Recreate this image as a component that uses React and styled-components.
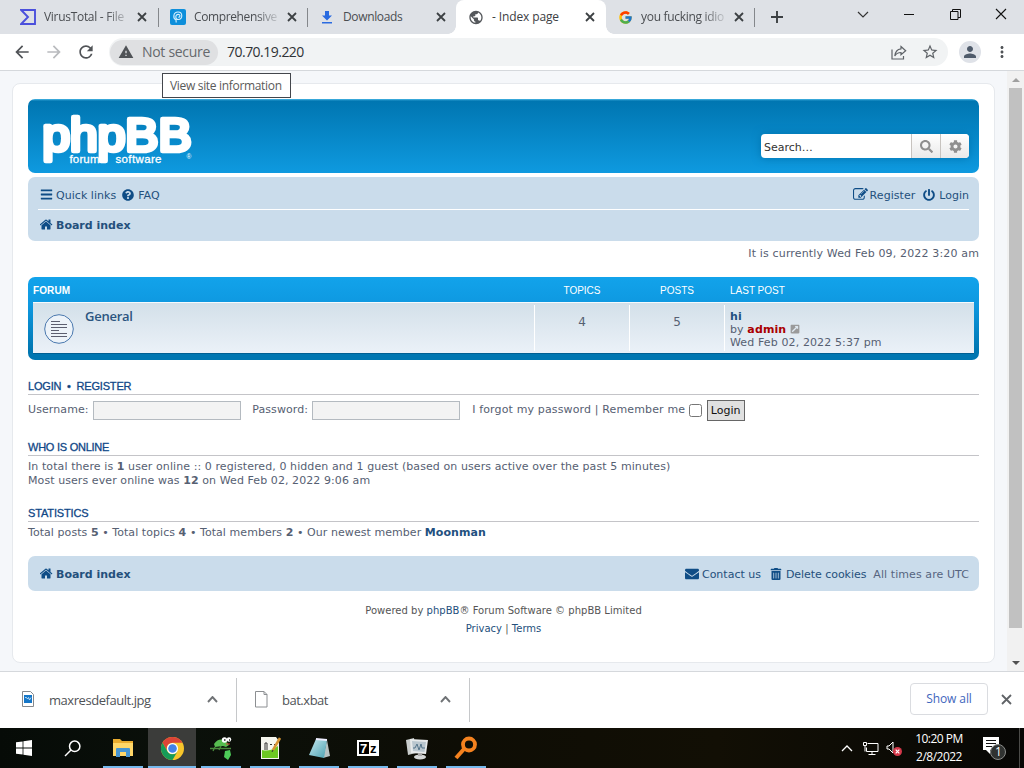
import React from "react";
import styled, { createGlobalStyle } from "styled-components";
import {
  MdArrowBack,
  MdArrowForward,
  MdRefresh,
  MdWarning,
  MdStarBorder,
  MdPerson,
  MdMoreVert,
  MdPublic,
} from "react-icons/md";
import {
  FaBars,
  FaQuestionCircle,
  FaPowerOff,
  FaEnvelope,
  FaTrashAlt,
  FaSearch,
  FaCog,
  FaExternalLinkSquareAlt,
} from "react-icons/fa";
import { FcGoogle } from "react-icons/fc";

const GlobalStyle = createGlobalStyle`
  * {
    box-sizing: border-box;
  }
  body {
    margin: 0;
    overflow: hidden;
    background: #fff;
  }
`;

const ui = `"Open Sans", "Noto Sans", sans-serif`;
const verdana = `"DejaVu Sans", sans-serif`;
const arial = `"Liberation Sans", Arial, sans-serif`;

const Screen = styled.div`
  width: 1024px;
  height: 768px;
  display: flex;
  flex-direction: column;
  overflow: hidden;
  position: relative;
  font-family: ${ui};
`;

/* browser tabs */

const TabStrip = styled.div`
  height: 34px;
  background: #dee1e6;
  display: flex;
  align-items: stretch;
  padding-left: 9px;
  flex: none;
`;

const TabItem = styled.div`
  width: 149px;
  display: flex;
  align-items: center;
  padding-left: ${(p) => p.$indent ?? 12}px;
  position: relative;
  color: ${(p) => (p.$active ? "#3c4043" : "#4a4d51")};
  background: ${(p) => (p.$active ? "#fff" : "transparent")};
  border-radius: ${(p) => (p.$active ? "8px 8px 0 0" : "0")};

  ${(p) =>
    p.$active &&
    `
    width: 150px;
    margin-right: -1px;
    &::before,
    &::after {
      content: "";
      position: absolute;
      bottom: 0;
      width: 8px;
      height: 8px;
    }
    &::before {
      left: -8px;
      background: radial-gradient(circle at 0 0, transparent 7.5px, #fff 8px);
    }
    &::after {
      right: -8px;
      background: radial-gradient(circle at 100% 0, transparent 7.5px, #fff 8px);
    }
  `}
`;

const Divider = styled.span`
  position: absolute;
  right: -1px;
  top: 8px;
  width: 1px;
  height: 19px;
  background: #84878b;
`;

const Favicon = styled.span`
  width: 16px;
  height: 16px;
  flex: none;
  display: flex;
  align-items: center;
  justify-content: center;
  color: #55585c;
`;

const TabTitle = styled.span`
  margin-left: 8px;
  width: 84px;
  overflow: hidden;
  white-space: pre;
  font-size: 12px;
  line-height: 18px;
  letter-spacing: ${(p) => p.$track || 0}px;
  mask-image: ${(p) =>
    p.$fade ? "linear-gradient(to right, #000 62px, rgba(0, 0, 0, 0.15) 84px)" : "none"};
`;

const TabClose = styled.span`
  margin-left: 9px;
  display: flex;
`;

const NewTab = styled.span`
  width: 44px;
  margin-left: 1px;
  display: flex;
  align-items: center;
  justify-content: center;
`;

const WindowControls = styled.div`
  margin-left: auto;
  display: flex;
  height: 28px;
`;

const WindowButton = styled.span`
  width: 46px;
  display: flex;
  align-items: center;
  justify-content: center;
`;

/* toolbar */

const Toolbar = styled.div`
  height: 37px;
  flex: none;
  display: flex;
  align-items: center;
  background: #fff;
  border-bottom: 1px solid #d5d8dc;
  padding: 0 0 0 12px;
`;

const NavButton = styled.span`
  width: 20px;
  height: 20px;
  margin-right: 12px;
  display: flex;
  align-items: center;
  justify-content: center;
  color: ${(p) => (p.$disabled ? "#b9bbbe" : "#505357")};
`;

const Omnibox = styled.div`
  width: 839px;
  height: 28px;
  margin-left: 1px;
  border-radius: 14px;
  background: #f1f3f4;
  display: flex;
  align-items: center;
  padding-right: 9px;
`;

const SecurityChip = styled.span`
  width: 108px;
  height: 25px;
  margin-left: 1px;
  border-radius: 13px;
  background: #dfe0e2;
  display: flex;
  align-items: center;
  padding-left: 8px;
  font-size: 14px;
  line-height: 22px;
  letter-spacing: -0.3px;
  color: #65686c;
  white-space: nowrap;

  svg {
    margin-right: 8px;
    color: #505357;
  }
`;

const Url = styled.span`
  flex: 1;
  margin: -2px 0 0 9px;
  font-size: 14px;
  letter-spacing: -0.52px;
  color: #2f3236;
`;

const OmniAction = styled.span`
  display: flex;
  margin-left: 14px;
  color: #5f6368;
`;

const Avatar = styled.span`
  width: 22px;
  height: 22px;
  margin: 0 12px 0 11px;
  border-radius: 50%;
  background: #dfe2e8;
  color: #4f5b6b;
  display: flex;
  align-items: center;
  justify-content: center;
`;

const SiteTooltip = styled.div`
  position: absolute;
  left: 162px;
  top: 73px;
  width: 129px;
  height: 25px;
  border: 1px solid #43464c;
  background: #fff;
  font-size: 12px;
  line-height: 24px;
  letter-spacing: -0.32px;
  padding-left: 7px;
  color: #5a5a5a;
  white-space: nowrap;
  z-index: 2;
`;

/* page */

const Viewport = styled.div`
  height: 600px;
  flex: none;
  display: flex;
  background: #f5f7fa;
`;

const Page = styled.div`
  flex: 1;
  padding: 12px 12px 0;
  font-family: ${verdana};
  font-size: 11px;
  line-height: 14px;
  color: #566072;
`;

const Wrap = styled.div`
  height: 580px;
  border: 1px solid #e6e9ed;
  border-radius: 8px;
  background: #fff;
  padding: 15px;
  display: flex;
  flex-direction: column;
`;

const HeaderBar = styled.div`
  height: 74px;
  flex: none;
  border-radius: 7px;
  background: linear-gradient(#4bb8e6 0, #0076b1 2px, #12a3eb 92px);
  display: flex;
  align-items: flex-start;
  justify-content: space-between;
  padding: 12px 10px 0 13px;
`;

const SearchBox = styled.div`
  width: 208px;
  height: 24px;
  margin-top: 23px;
  border-radius: 4px;
  background: #fff;
  display: flex;
  overflow: hidden;
  box-shadow: 0 0 8px #0075b0;
`;

const SearchInput = styled.span`
  flex: 1;
  padding-left: 3px;
  line-height: 27px;
  font-size: 11px;
  color: #333;
`;

const SearchButton = styled.span`
  width: ${(p) => p.$width}px;
  border-left: 1px solid #c7c3bf;
  background: linear-gradient(#fff, #e9e9e9);
  color: #8f8f8f;
  display: flex;
  align-items: center;
  justify-content: center;
`;

const NavBar = styled.div`
  flex: none;
  height: ${(p) => p.$height}px;
  margin-top: ${(p) => p.$top}px;
  border-radius: 7px;
  background: #cadceb;
  padding: ${(p) => (p.$footer ? 1 : 3)}px 10px 0;
`;

const NavRow = styled.div`
  height: ${(p) => p.$height}px;
  display: flex;
  align-items: center;
  padding: ${(p) => (p.$line ? 2 : 1)}px 0 0 2px;
  border-bottom: ${(p) => (p.$line ? "1px solid #fff" : "0")};
`;

const NavLink = styled.span`
  display: inline-flex;
  align-items: center;
  gap: ${(p) => p.$gap ?? 4}px;
  margin-right: ${(p) => p.$after || 0}px;
  font-weight: ${(p) => (p.$bold ? 700 : 400)};
  letter-spacing: ${(p) => p.$track || 0}px;
  line-height: 16px;
  color: ${(p) => (p.$muted ? "#566580" : "#24507c")};
  white-space: nowrap;

  svg {
    color: #0f4d86;
    flex: none;
    margin-top: -2px;
  }
`;

const Spacer = styled.span`
  flex: 1;
`;

const CurrentTime = styled.div`
  height: 14px;
  margin-top: 6px;
  text-align: right;
  letter-spacing: 0.15px;
  white-space: nowrap;
`;

const ForumBox = styled.div`
  height: 83px;
  flex: none;
  margin-top: 16px;
  border-radius: 7px;
  padding: 0 5px;
  background: linear-gradient(#12a3eb 0, #0e98e0 28px, #0076b1 74px);
`;

const ForumHead = styled.div`
  height: 25px;
  display: grid;
  grid-template-columns: 501px 95px 95px 1fr;
  align-items: center;
  padding-top: 2px;
  font-family: ${arial};
  font-size: 10px;
  color: #fff;

  span {
    text-align: center;
    padding-left: 1px;
  }
  span:first-child {
    font-weight: 700;
    text-align: left;
    padding-left: 0;
    letter-spacing: 0.1px;
  }
  span:last-child {
    text-align: left;
    padding-left: 6px;
  }
`;

const ForumRow = styled.div`
  height: 52px;
  border-top: 1px solid #f5fafd;
  background: linear-gradient(#d3e0e9, #ebf1f8);
  border-bottom: 1px solid #005f93;
  display: grid;
  grid-template-columns: 501px 95px 95px 1fr;
  padding: 2px 0;
`;

const ForumTitle = styled.div`
  display: flex;
  padding: 9px 0 0 11px;
  gap: 11px;
  font-size: 13px;
  font-family: "Open Sans", sans-serif;
  font-weight: 600;
  letter-spacing: -0.25px;
  color: #2b5580;
`;

const TitleText = styled.span`
  margin-top: -6px;
  line-height: 16px;
`;

const CountCell = styled.div`
  border-left: 1px solid #fff;
  text-align: center;
  padding-top: 10px;
  font-size: 12px;
`;

const LastPost = styled.div`
  border-left: 1px solid #fff;
  padding: 5px 0 0 5px;
  line-height: 13px;
  letter-spacing: 0.12px;
  white-space: nowrap;

  svg {
    color: #9a9a9a;
    vertical-align: -1px;
  }
`;

const Strong = styled.b`
  color: ${(p) => p.$color || "inherit"};
`;

const SectionTitle = styled.h3`
  margin: ${(p) => p.$top}px 0 0;
  height: 16px;
  flex: none;
  border-bottom: 1px solid #c4c4c8;
  font-family: ${arial};
  font-size: 11px;
  font-weight: 400;
  line-height: 14px;
  letter-spacing: ${(p) => p.$track || 0}px;
  -webkit-text-stroke: 0.3px #115098;
  color: #114075;
  white-space: pre;
`;

const LoginRow = styled.div`
  height: 30px;
  display: flex;
  align-items: flex-start;
  padding-top: 8px;
  letter-spacing: 0.1px;
  white-space: nowrap;
`;

const TextInput = styled.span`
  width: 148px;
  height: 19px;
  margin: -2px 11.5px 0 4px;
  border: 1px solid #b4bac0;
  background: #f3f3f3;
`;

const LoginHint = styled.span`
  margin-left: 0.5px;
  letter-spacing: 0.14px;
`;

const Checkbox = styled.span`
  width: 13px;
  height: 13px;
  margin: 1px 5px 0 3.5px;
  border: 1px solid #767676;
  border-radius: 2.5px;
  background: #fff;
`;

const LoginButton = styled.span`
  width: 38px;
  height: 21px;
  margin-top: -3px;
  border: 1px solid #666;
  background: #e0e0e0;
  color: #111;
  text-align: center;
  line-height: 19px;
  letter-spacing: 0;
`;

const StatText = styled.div`
  margin-top: 4px;
  white-space: nowrap;
`;

const StatLine = styled.div`
  letter-spacing: ${(p) => p.$track || 0}px;
`;

const Copyright = styled.div`
  margin-top: 11px;
  text-align: center;
  font-size: 10px;
  line-height: 18px;
  color: #555;
  letter-spacing: 0.02px;

  em {
    font-style: normal;
    color: #24507c;
  }
`;

const Scrollbar = styled.div`
  width: 17px;
  background: #f1f1f1;
  display: flex;
  flex-direction: column;
  align-items: center;
`;

const ScrollArrow = styled.span`
  height: 17px;
  display: flex;
  align-items: center;
`;

const Thumb = styled.span`
  width: 13px;
  height: 540px;
  background: #c1c1c1;
`;

/* download shelf */

const Shelf = styled.div`
  height: 57px;
  flex: none;
  border-top: 1px solid #d5d8dc;
  background: #fff;
  display: flex;
  align-items: center;
`;

const Download = styled.div`
  width: ${(p) => p.$width}px;
  height: 44px;
  border-right: 1px solid #c6c8ca;
  display: flex;
  align-items: center;
  padding: 0 18px 2px ${(p) => p.$left}px;
  font-size: 13px;
  letter-spacing: ${(p) => p.$track}px;
  color: #505357;

  span {
    flex: 1;
    margin-left: ${(p) => p.$gap}px;
    padding-top: 2px;
  }
`;

const ShowAll = styled.span`
  width: 78px;
  height: 32px;
  margin: -2px 0 0 auto;
  border: 1px solid #dadce0;
  border-radius: 4px;
  text-align: center;
  font-size: 12px;
  font-weight: 500;
  line-height: 30px;
  letter-spacing: -0.1px;
  color: #3f66bd;
`;

const ShelfClose = styled.span`
  width: 36px;
  margin-top: -2px;
  display: flex;
  justify-content: center;
`;

/* taskbar */

const Taskbar = styled.div`
  height: 40px;
  flex: none;
  background: linear-gradient(90deg, #060b07 0, #0a100a 18%, #0e0d05 45%, #120f05 70%, #070705 100%);
  display: flex;
  color: #fff;
`;

const TaskItem = styled.span`
  width: 48px;
  margin-right: ${(p) => p.$after ?? 1}px;
  display: flex;
  align-items: center;
  justify-content: center;
  position: relative;
  background: ${(p) => (p.$active ? "#3b3c3a" : "transparent")};

  &::after {
    content: "";
    display: ${(p) => (p.$open || p.$active ? "block" : "none")};
    position: absolute;
    left: ${(p) => (p.$active ? 0 : 4)}px;
    right: ${(p) => (p.$active ? 0 : 4)}px;
    bottom: 0;
    height: 2px;
    background: #76b9ed;
  }
`;

const Tray = styled.div`
  margin-left: auto;
  display: flex;
  align-items: center;
`;

const TrayIcon = styled.span`
  display: flex;
  margin-left: ${(p) => p.$before}px;
`;

const Clock = styled.div`
  width: 62px;
  margin: -1px 12px 0 5px;
  text-align: center;
  font-size: 12px;
  line-height: 18px;
  letter-spacing: -0.5px;
  white-space: nowrap;
`;

const Peek = styled.span`
  width: 5px;
  height: 40px;
  margin-left: 12px;
  border-left: 1px solid #4b4b48;
`;

const HOME_PATH =
  "M1408 992v480q0 26-19 45t-45 19h-384v-384h-256v384h-384q-26 0-45-19t-19-45v-480q0-1 .5-3t.5-3l575-474 575 474q1 2 1 6zm223-69l-62 74q-8 9-21 11h-3q-13 0-21-7l-692-577-692 577q-12 8-24 7-13-2-21-11l-62-74q-8-10-7-23.5t11-21.5l719-599q32-26 76-26t76 26l244 204v-195q0-14 9-23t23-9h192q14 0 23 9t9 23v408l219 182q10 8 11 21.5t-7 23.5z";
const EDIT_PATH =
  "M888 1184l116-116-152-152-116 116v56h96v96h56zm440-720q-16-16-33 1l-350 350q-17 17-1 33t33-1l350-350q17-17 1-33zm80 594v190q0 119-84.5 203.5t-203.5 84.5h-832q-119 0-203.5-84.5t-84.5-203.5v-832q0-119 84.5-203.5t203.5-84.5h832q63 0 117 25 15 7 18 23 3 17-9 29l-49 49q-14 14-32 8-23-6-45-6h-832q-66 0-113 47t-47 113v832q0 66 47 113t113 47h832q66 0 113-47t47-113v-126q0-13 9-22l64-64q15-15 35-7t20 29zm-96-738l288 288-672 672h-288v-288zm444 132l-92 92-288-288 92-92q28-28 68-28t68 28l152 152q28 28 28 68t-28 68z";

const HomeIcon = () => (
  <svg width="13" height="13" viewBox="64 128 1664 1536" fill="currentColor">
    <path d={HOME_PATH} />
  </svg>
);

const EditIcon = () => (
  <svg width="15" height="15" viewBox="0 0 1792 1792" fill="currentColor">
    <path d={EDIT_PATH} />
  </svg>
);

const Cross = ({ size = 8, width = 1.8, color = "#3c4043" }) => (
  <svg width={size + 2} height={size + 2} viewBox={`-1 -1 ${size + 2} ${size + 2}`}>
    <path d={`M0 0L${size} ${size}M${size} 0L0 ${size}`} stroke={color} strokeWidth={width} />
  </svg>
);

const Caret = ({ down, color, width = 1.5, w = 10, h = 5 }) => (
  <svg width={w + 2} height={h + 2} viewBox={`-1 -1 ${w + 2} ${h + 2}`} fill="none">
    <path
      d={down ? `M0 0L${w / 2} ${h}L${w} 0` : `M0 ${h}L${w / 2} 0L${w} ${h}`}
      stroke={color}
      strokeWidth={width}
    />
  </svg>
);

const VirusTotalIcon = () => (
  <svg width="16" height="16" viewBox="0 0 16 16" fill="none">
    <path d="M1.2 1H15V15H1.2L8 8Z" stroke="#4b50dc" strokeWidth="1.9" />
  </svg>
);

const SpiralIcon = () => (
  <svg width="16" height="16" viewBox="0 0 16 16" fill="none">
    <rect width="16" height="16" rx="2" fill="#0e8fdb" />
    <path
      d="M6.200 13.500L6 11C2.500 9 3.300 3 8 3C13 3 13 10.500 8.300 10.500C5 10.500 5 5.400 8.200 5.400C10.700 5.400 10.300 8.400 8.300 8.300"
      stroke="#d9f2ff"
      strokeWidth="1.1"
    />
  </svg>
);

const DownloadIcon = () => (
  <svg width="12" height="13" viewBox="0 0 12 13" fill="#2a6be0">
    <path d="M4 0h4v4.500h3L6 9.500 1 4.500h3zM1 11h10v1.500H1z" />
  </svg>
);

const ShareIcon = () => (
  <svg width="16" height="15" viewBox="0 0 16 15" fill="none" stroke="#5f6368" strokeWidth="1.2">
    <path d="M1 4.500V14h11.500v-3" />
    <path d="M10 1.500l4.700 4.200L10 9.800V7.500C7 7.500 5.200 8.500 3.800 11 4.200 7 6.300 4.200 10 3.800z" />
  </svg>
);

const Logo = () => (
  <svg width="156" height="56" viewBox="0 0 156 56" fill="#fff">
    <text
      x="1.5"
      y="40"
      fontFamily="Liberation Sans, Arial, sans-serif"
      fontSize="47"
      stroke="#fff"
      strokeWidth="4.6"
      strokeLinejoin="round"
      textLength="149"
      lengthAdjust="spacingAndGlyphs"
    >
      phpBB
    </text>
    <g fontFamily="Liberation Sans, Arial, sans-serif" fontSize="11.5" stroke="#fff" strokeWidth="0.3">
      <text x="28.5" y="51.5" textLength="30">forum</text>
      <text x="74.5" y="51.5" textLength="46">software</text>
    </g>
    <text x="145.500" y="47.500" fontSize="6.5" fontFamily="Liberation Sans, Arial, sans-serif">®</text>
  </svg>
);

const ForumIcon = () => (
  <svg width="30" height="30" viewBox="0 0 30 30" fill="none">
    <circle cx="15" cy="15" r="14.3" fill="#edf3f9" stroke="#4a78ae" />
    <path
      d="M7 7.500h9M7 10.500h16M7 13.500h16M7 16.500h8M7 19.500h16M7 22.500h16"
      stroke="#5d5f70"
    />
  </svg>
);

const ImageFileIcon = () => (
  <svg width="12" height="16" viewBox="0 0 12 16">
    <path d="M.5.500h8l3 3v12H.5z" fill="#fff" stroke="#85898d" />
    <rect x="2" y="4" width="8" height="8" fill="#1677c8" />
    <path d="M3 6.500h1.500l1 1.500 1-1.500 1 2.500L9 6.500" fill="none" stroke="#d8ecfa" strokeWidth="0.8" />
  </svg>
);

const FileIcon = () => (
  <svg width="13" height="17" viewBox="0 0 13 17">
    <path d="M.5.500h8.500l3 3v12.500H.5z" fill="#fff" stroke="#8c8f92" />
    <path d="M9 .5v3h3" fill="none" stroke="#8c8f92" />
  </svg>
);

const WindowsIcon = () => (
  <svg width="16" height="16" viewBox="0 0 16 16" fill="#fff">
    <path d="M0 2.300L6.600 1.400V7.600H0zM7.400 1.300L16 0v7.600H7.400zM0 8.400h6.600v6.200L0 13.700zM7.400 8.400H16V16l-8.600-1.300z" />
  </svg>
);

const SearchGlass = () => (
  <svg width="17" height="17" viewBox="0 0 17 17" fill="none" stroke="#fff" strokeWidth="1.5">
    <circle cx="10.7" cy="6.3" r="5.2" />
    <path d="M7 10L1 16" />
  </svg>
);

const ExplorerIcon = () => (
  <svg width="22" height="20" viewBox="0 0 22 20">
    <path d="M1 1h7l2 2h11v15H1z" fill="#e9ac2f" />
    <path d="M1 5h20v13H1z" fill="#ffd768" />
    <path d="M4 19v-8q0-1 1-1h12q1 0 1 1v8h-4v-5H8v5z" fill="#4695d2" />
  </svg>
);

const ChromeIcon = () => (
  <svg width="23" height="23" viewBox="0 0 24 24">
    <circle cx="12" cy="12" r="12" fill="#f7c52b" />
    <path d="M1.600 6A12 12 0 0 1 22.400 6H12A6 6 0 0 0 6.800 15z" fill="#dc4437" />
    <path d="M1.600 6A12 12 0 0 0 12 24L17.200 15A6 6 0 0 1 6.800 15z" fill="#169b58" />
    <circle cx="12" cy="12" r="5.8" fill="#fff" />
    <circle cx="12" cy="12" r="4.5" fill="#4382e8" />
  </svg>
);

const ChameleonIcon = () => (
  <svg width="24" height="24" viewBox="0 0 24 24" fill="none">
    <path d="M5 8Q10 1 17 5l3 4-3 2-3-1-8 1z" fill="#57bd50" />
    <path d="M1 12.500h21M6 11l-2 4M12 10l-2 4" stroke="#4a8a3c" strokeWidth="1.3" />
    <path d="M16 15l5-1 1 5-3 5-4-3z" fill="#4dcb58" />
    <circle cx="15.5" cy="4" r="2.7" fill="#fff" />
    <circle cx="20" cy="3.5" r="2.2" fill="#fff" />
    <path d="M15 4h1.500M20 4h1" stroke="#222" strokeWidth="1.5" />
    <path d="M17 8h4" stroke="#d83a34" />
  </svg>
);

const NotepadPlusIcon = () => (
  <svg width="23" height="24" viewBox="0 0 23 24">
    <path d="M2 1h15l3 4v18H2z" fill="#f5f6ee" />
    <path d="M3 14q8 2 16-4v12H3z" fill="#6cc822" />
    <path d="M6 14V7h2v7M11 8.500h2M15 8.500h2" stroke="#333" fill="none" />
    <path d="M21 2l-7 12" stroke="#d79532" strokeWidth="2.5" />
    <path d="M14 14l-1 2" stroke="#333" />
  </svg>
);

const NotepadIcon = () => (
  <svg width="23" height="22" viewBox="0 0 23 22">
    <defs>
      <linearGradient id="pad" x1="0" y1="0" x2="1" y2="1">
        <stop offset="0" stopColor="#c8ebf2" />
        <stop offset="1" stopColor="#4aa0b0" />
      </linearGradient>
    </defs>
    <path d="M19 3l3 16-7 2z" fill="#b7c2c2" />
    <path d="M8 2l11 1-3 18-15-3z" fill="url(#pad)" />
    <path d="M8 2l11 1" stroke="#eef" strokeWidth="2" />
  </svg>
);

const SevenZipIcon = () => (
  <svg width="22" height="16" viewBox="0 0 22 16">
    <rect width="22" height="16" fill="#fff" />
    <rect x="2" y="2" width="10" height="12" fill="#000" />
    <text x="3" y="13" fontFamily="Liberation Sans, sans-serif" fontSize="13" fontWeight="700" fill="#fff">7</text>
    <text x="13" y="13" fontFamily="Liberation Sans, sans-serif" fontSize="13" fontWeight="700" fill="#000">z</text>
  </svg>
);

const MonitorIcon = () => (
  <svg width="24" height="23" viewBox="0 0 24 23">
    <path d="M1 3l8-2 2 15-8 2z" fill="#c9cdcc" />
    <path d="M5 2l18 1-2 14-15-1z" fill="#e7eaeb" />
    <path d="M7 4l14 1-1.500 10L8 14z" fill="#bac7cf" />
    <path d="M8 11h2l2-4 2 6 2-6 1 4h3" fill="none" stroke="#55758b" />
    <ellipse cx="15" cy="20" rx="6" ry="2.5" fill="#d5d8d8" />
    <path d="M13 16h4v3h-4z" fill="#aaa" />
  </svg>
);

const OrangeSearchIcon = () => (
  <svg width="24" height="24" viewBox="0 0 24 24" fill="none" stroke="#f5821f">
    <circle cx="15" cy="8.5" r="6" strokeWidth="3.8" />
    <path d="M10 13L2 22" strokeWidth="4" />
  </svg>
);

const NetworkIcon = () => (
  <svg width="17" height="15" viewBox="0 0 17 15" fill="none" stroke="#fff">
    <path d="M5.500 2.500h10.500v8H4.500v-4M10 10.500v3M6.500 13.500h7" />
    <path d="M1.500 1.500h3v3h-3zM3 4.500v6" />
  </svg>
);

const VolumeIcon = () => (
  <svg width="17" height="17" viewBox="0 0 17 17" fill="none">
    <path d="M1 6h2l4-4v11l-4-4H1z" stroke="#fff" />
    <circle cx="11.5" cy="11.5" r="4.5" fill="#d5384a" />
    <path d="M9.700 9.700l3.600 3.600M13.300 9.700l-3.600 3.600" stroke="#fff" strokeWidth="1.2" />
  </svg>
);

const ActionCenterIcon = () => (
  <svg width="25" height="25" viewBox="0 0 25 25">
    <path d="M1 1h16v13H8v4l-4-4H1z" fill="#fff" />
    <path d="M4 4.500h10M4 7.500h10M4 10.500h6" stroke="#111" />
    <circle cx="16" cy="16" r="7.5" fill="#303331" stroke="#8a8c8a" />
    <text x="13" y="20.3" fontFamily="Open Sans, sans-serif" fontSize="12" fill="#fff">1</text>
  </svg>
);

const tabs = [
  { title: "VirusTotal - File", icon: <VirusTotalIcon />, fade: true, track: -0.3, indent: 11 },
  { title: "Comprehensive", icon: <SpiralIcon />, fade: true, track: -0.38 },
  { title: "Downloads", icon: <DownloadIcon />, track: -0.35 },
  { title: "- Index page", icon: <MdPublic size={17} />, active: true, track: -0.12 },
  { title: "you fucking idio", icon: <FcGoogle size={15} />, fade: true, track: -0.3 },
];

const tasks = [
  { name: "explorer", icon: <ExplorerIcon /> },
  { name: "chrome", icon: <ChromeIcon />, active: true },
  { name: "chameleon", icon: <ChameleonIcon /> },
  { name: "notepadpp", icon: <NotepadPlusIcon /> },
  { name: "notepad", icon: <NotepadIcon /> },
  { name: "7zip", icon: <SevenZipIcon /> },
  { name: "monitor", icon: <MonitorIcon /> },
  { name: "search", icon: <OrangeSearchIcon /> },
];

const BrowserTabs = () => (
  <TabStrip>
    {tabs.map((tab, i) => (
      <TabItem key={tab.title} $active={tab.active} $indent={tab.indent}>
        <Favicon>{tab.icon}</Favicon>
        <TabTitle $fade={tab.fade} $track={tab.track}>
          {tab.title}
        </TabTitle>
        <TabClose>
          <Cross />
        </TabClose>
        {i !== 2 && i !== 3 && <Divider />}
      </TabItem>
    ))}
    <NewTab>
      <svg width="12" height="12" viewBox="0 0 12 12">
        <path d="M6 0v12M0 6h12" stroke="#3c4043" strokeWidth="1.9" />
      </svg>
    </NewTab>
    <WindowControls>
      <WindowButton>
        <Caret down color="#333" width={1.2} />
      </WindowButton>
      <WindowButton>
        <svg width="10" height="2">
          <path d="M0 1.500h10" stroke="#111" />
        </svg>
      </WindowButton>
      <WindowButton>
        <svg width="11" height="11" fill="none" stroke="#111">
          <path d="M.5 2.500h7.500v8H.5zM2.500 2.500v-2h8v8H8" />
        </svg>
      </WindowButton>
      <WindowButton>
        <Cross size={10} width={1.1} color="#111" />
      </WindowButton>
    </WindowControls>
  </TabStrip>
);

const AddressBar = () => (
  <Toolbar>
    <NavButton>
      <MdArrowBack size={20} />
    </NavButton>
    <NavButton $disabled>
      <MdArrowForward size={20} />
    </NavButton>
    <NavButton>
      <MdRefresh size={20} />
    </NavButton>
    <Omnibox>
      <SecurityChip>
        <MdWarning size={16} />
        Not secure
      </SecurityChip>
      <Url>70.70.19.220</Url>
      <OmniAction>
        <ShareIcon />
      </OmniAction>
      <OmniAction>
        <MdStarBorder size={18} />
      </OmniAction>
    </Omnibox>
    <Avatar>
      <MdPerson size={18} />
    </Avatar>
    <MdMoreVert size={18} color="#505357" />
  </Toolbar>
);

const ForumPage = () => (
  <Page>
    <Wrap>
      <HeaderBar>
        <Logo />
        <SearchBox>
          <SearchInput>Search…</SearchInput>
          <SearchButton $width={29}>
            <FaSearch size={13} />
          </SearchButton>
          <SearchButton $width={29}>
            <FaCog size={13} />
          </SearchButton>
        </SearchBox>
      </HeaderBar>

      <NavBar $height={64} $top={4}>
        <NavRow $height={30} $line>
          <NavLink $after={6} $gap={3} $track={0.04}>
            <FaBars size={13} /> Quick links
          </NavLink>
          <NavLink>
            <FaQuestionCircle size={12} /> FAQ
          </NavLink>
          <Spacer />
          <NavLink $after={8} $gap={2} $track={0.05}>
            <EditIcon /> Register
          </NavLink>
          <NavLink>
            <FaPowerOff size={12} /> Login
          </NavLink>
        </NavRow>
        <NavRow $height={30}>
          <NavLink $bold $gap={3}>
            <HomeIcon /> Board index
          </NavLink>
        </NavRow>
      </NavBar>

      <CurrentTime>It is currently Wed Feb 09, 2022 3:20 am</CurrentTime>

      <ForumBox>
        <ForumHead>
          <span>FORUM</span>
          <span>TOPICS</span>
          <span>POSTS</span>
          <span>LAST POST</span>
        </ForumHead>
        <ForumRow>
          <ForumTitle>
            <ForumIcon />
            <TitleText>General</TitleText>
          </ForumTitle>
          <CountCell>4</CountCell>
          <CountCell>5</CountCell>
          <LastPost>
            <Strong $color="#1f5080">hi</Strong>
            <br />
            by <Strong $color="#a00">admin</Strong> <FaExternalLinkSquareAlt size={10} />
            <br />
            Wed Feb 02, 2022 5:37 pm
          </LastPost>
        </ForumRow>
      </ForumBox>

      <SectionTitle $top={19} $track={-0.18}>{"LOGIN  •  REGISTER"}</SectionTitle>
      <LoginRow>
        Username:
        <TextInput />
        Password:
        <TextInput />
        <LoginHint>I forgot my password | Remember me</LoginHint>
        <Checkbox />
        <LoginButton>Login</LoginButton>
      </LoginRow>

      <SectionTitle $top={15} $track={-0.25}>WHO IS ONLINE</SectionTitle>
      <StatText>
        <StatLine $track={0.085}>
          In total there is <b>1</b> user online :: 0 registered, 0 hidden and 1 guest (based on
          users active over the past 5 minutes)
        </StatLine>
        <StatLine $track={0.08}>
          Most users ever online was <b>12</b> on Wed Feb 02, 2022 9:06 am
        </StatLine>
      </StatText>

      <SectionTitle $top={18} $track={-0.15}>STATISTICS</SectionTitle>
      <StatText>
        <StatLine $track={0.06}>
          Total posts <b>5</b> • Total topics <b>4</b> • Total members <b>2</b> • Our newest member{" "}
          <Strong $color="#1f5080">Moonman</Strong>
        </StatLine>
      </StatText>

      <NavBar $height={35} $top={16} $footer>
        <NavRow $height={34}>
          <NavLink $bold $gap={3}>
            <HomeIcon /> Board index
          </NavLink>
          <Spacer />
          <NavLink $after={9} $gap={3}>
            <FaEnvelope size={14} /> Contact us
          </NavLink>
          <NavLink $after={7} $gap={4} $track={-0.05}>
            <FaTrashAlt size={12} /> Delete cookies
          </NavLink>
          <NavLink $muted $track={0.08}>All times are UTC</NavLink>
        </NavRow>
      </NavBar>

      <Copyright>
        Powered by <em>phpBB</em>® Forum Software © phpBB Limited
        <br />
        <em>Privacy</em> | <em>Terms</em>
      </Copyright>
    </Wrap>
  </Page>
);

export default function App() {
  return (
    <>
      <GlobalStyle />
      <Screen>
        <BrowserTabs />
        <AddressBar />
        <Viewport>
          <ForumPage />
          <Scrollbar>
            <ScrollArrow>
              <svg width="8" height="4" fill="#a0a0a0">
                <path d="M0 4l4-4 4 4z" />
              </svg>
            </ScrollArrow>
            <Thumb />
            <Spacer />
            <ScrollArrow>
              <svg width="8" height="4" fill="#505050">
                <path d="M0 0h8L4 4z" />
              </svg>
            </ScrollArrow>
          </Scrollbar>
        </Viewport>
        <SiteTooltip>View site information</SiteTooltip>
        <Shelf>
          <Download $width={237} $left={22} $gap={15} $track={-0.45}>
            <ImageFileIcon />
            <span>maxresdefault.jpg</span>
            <Caret color="#707376" width={1.9} w={9} />
          </Download>
          <Download $width={233} $left={18} $gap={14} $track={-0.48}>
            <FileIcon />
            <span>bat.xbat</span>
            <Caret color="#707376" width={1.9} w={9} />
          </Download>
          <ShowAll>Show all</ShowAll>
          <ShelfClose>
            <Cross size={9} color="#606367" />
          </ShelfClose>
        </Shelf>
        <Taskbar>
          <TaskItem $after={0}>
            <WindowsIcon />
          </TaskItem>
          <TaskItem $after={3}>
            <SearchGlass />
          </TaskItem>
          {tasks.map((task) => (
            <TaskItem key={task.name} $open $active={task.active}>
              {task.icon}
            </TaskItem>
          ))}
          <Tray>
            <Caret color="#fff" width={1.3} w={10} h={5} />
            <TrayIcon $before={9}>
              <NetworkIcon />
            </TrayIcon>
            <TrayIcon $before={7}>
              <VolumeIcon />
            </TrayIcon>
            <Clock>
              10:20 PM
              <br />
              2/8/2022
            </Clock>
            <ActionCenterIcon />
            <Peek />
          </Tray>
        </Taskbar>
      </Screen>
    </>
  );
}
